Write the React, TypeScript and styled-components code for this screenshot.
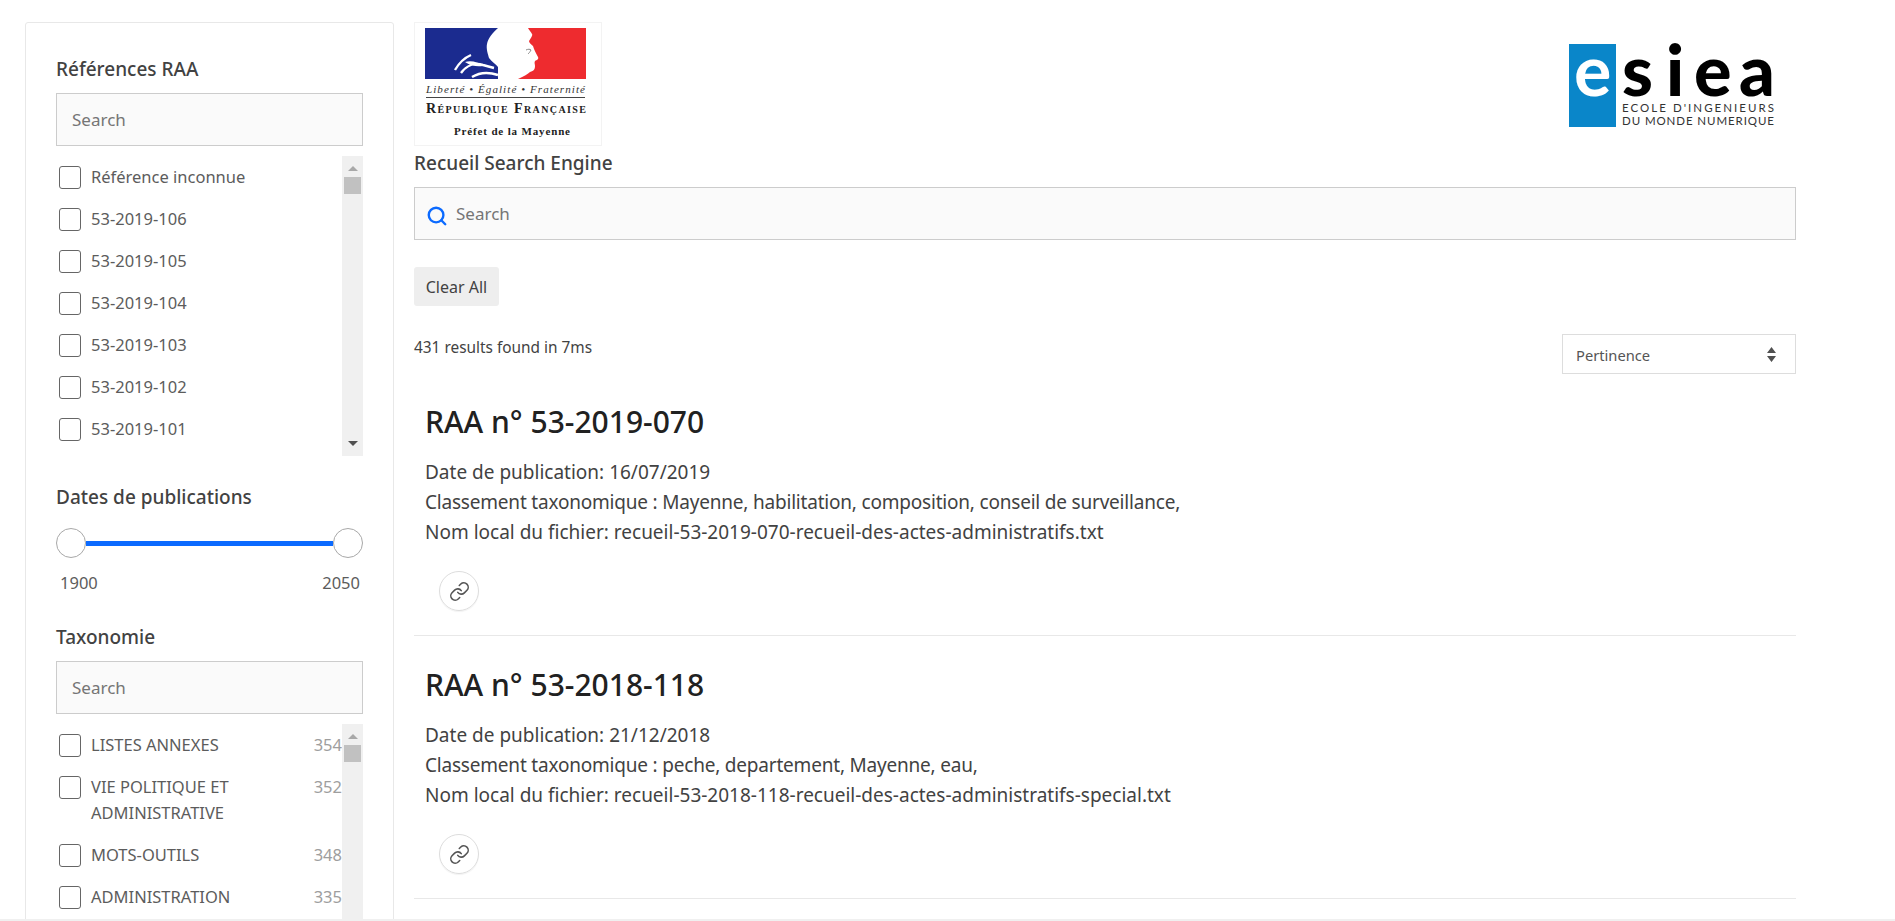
import React from 'react'
import styled, { createGlobalStyle } from 'styled-components'
import { Search, Link } from 'lucide-react'

const GlobalStyle = createGlobalStyle`
  html, body {
    margin: 0;
    height: 100%;
    overflow: hidden;
    background: #fff;
    font-family: "Noto Sans", "Open Sans", sans-serif;
    color: #424242;
  }
  #root { height: 100%; }
  * { box-sizing: border-box; }
`

const Page = styled.div`
  height: 921px;
  display: flex;
  flex-direction: column;
`
const Content = styled.div`
  flex: 1;
  min-height: 0;
  overflow: hidden;
  display: flex;
  align-items: flex-start;
  gap: 20px;
  padding: 22px 0 0 25px;
`
const BottomStrip = styled.div`
  height: 2px;
  background: #f0f0f0;
`

const Sidebar = styled.aside`
  width: 369px;
  flex-shrink: 0;
  border: 1px solid #e8e8e8;
  border-radius: 3px;
  padding: 33px 30px 40px 30px;
`
const FilterTitle = styled.h2`
  margin: 0 0 11px;
  font-size: 19px;
  line-height: 26px;
  font-weight: 500;
  color: #424242;
`
const FilterInput = styled.div`
  height: 53px;
  border: 1px solid #ccc;
  background: #fafafa;
  padding-left: 15px;
  display: flex;
  align-items: center;
  font-size: 17px;
  color: #757575;
`
const ListBox = styled.div<{ $height?: number }>`
  margin-top: 10px;
  display: flex;
  height: ${p => (p.$height ? `${p.$height}px` : 'auto')};
`
const Rows = styled.div`
  flex: 1;
  min-width: 0;
`
const Row = styled.div`
  display: flex;
  align-items: flex-start;
  padding: 8px 0;
  font-size: 16.5px;
  line-height: 26px;
  color: #5c5c5c;
`
const CheckBox = styled.span`
  width: 22px;
  height: 23px;
  margin: 2px 10px 0 3px;
  flex-shrink: 0;
  border: 1.5px solid #666;
  border-radius: 3px;
`
const RowLabel = styled.span`
  flex: 1;
  min-width: 0;
  padding-right: 20px;
`
const RowCount = styled.span`
  color: #9e9e9e;
`
const ScrollTrack = styled.div`
  width: 21px;
  flex-shrink: 0;
  background: #f0f0f0;
  display: flex;
  flex-direction: column;
  align-items: center;
  padding-top: 10px;
`
const ArrowUp = styled.span`
  border-left: 5px solid transparent;
  border-right: 5px solid transparent;
  border-bottom: 5px solid #a8a8a8;
`
const ArrowDown = styled.span`
  margin-top: auto;
  margin-bottom: 10px;
  border-left: 5px solid transparent;
  border-right: 5px solid transparent;
  border-top: 5px solid #505050;
`
const ScrollThumb = styled.span`
  width: 17px;
  height: 17px;
  margin-top: 6px;
  background: #c1c1c1;
`

const SliderBlock = styled.div`
  margin-top: 28px;
`
const SliderTrack = styled.div`
  margin-top: 18px;
  height: 30px;
  display: flex;
  align-items: center;
`
const Thumb = styled.span`
  width: 30px;
  height: 30px;
  border-radius: 50%;
  border: 1px solid #a8a8a8;
  background: #fff;
  flex-shrink: 0;
`
const SliderFill = styled.span`
  flex: 1;
  height: 5px;
  background: #0b6aff;
`
const SliderLabels = styled.div`
  display: flex;
  justify-content: space-between;
  padding: 0 3px 0 4px;
  margin-top: 12px;
  font-size: 16.5px;
  line-height: 26px;
  color: #5c5c5c;
`
const TaxonomyBlock = styled.div`
  margin-top: 28px;
`

const Main = styled.main`
  width: 1382px;
  flex-shrink: 0;
`
const LogoRow = styled.div`
  display: flex;
  justify-content: space-between;
  align-items: flex-start;
`
const EsieaSlot = styled.div`
  margin: 2px 21px 0 0;
  line-height: 0;
`
const StateLogo = styled.svg`
  display: block;
`
const EngineTitle = styled.h1`
  margin: 4px 0 11px;
  font-size: 19px;
  line-height: 26px;
  font-weight: 500;
  color: #424242;
`
const MainSearch = styled.div`
  height: 53px;
  width: 1382px;
  border: 1px solid #ccc;
  background: #fafafa;
  display: flex;
  align-items: center;
  padding-left: 11px;
  gap: 8px;
  font-size: 17px;
  color: #757575;
  svg { margin-top: 4px; }
`
const ClearButton = styled.button`
  display: block;
  margin-top: 27px;
  width: 85px;
  height: 39px;
  border: 0;
  border-radius: 3px;
  background: #eee;
  color: #424242;
  font: inherit;
  font-size: 16px;
  padding: 1px 0 0;
`
const ResultBar = styled.div`
  margin-top: 28px;
  display: flex;
  justify-content: space-between;
  align-items: flex-start;
`
const ResultStat = styled.span`
  font-size: 15.4px;
  line-height: 26px;
  padding-top: 1px;
  color: #424242;
`
const SortSelect = styled.div`
  width: 234px;
  height: 40px;
  border: 1px solid #ddd;
  display: flex;
  align-items: center;
  justify-content: space-between;
  padding: 1px 19px 0 13px;
  font-size: 14.7px;
  color: #555;
`
const Result = styled.article`
  padding: 26px 0 24px 11px;
  border-bottom: 1px solid #e8e8e8;
  & + & { padding-top: 27px; }
`
const ResultTitle = styled.h3`
  margin: 0 0 13px;
  font-size: 30px;
  line-height: 44px;
  font-weight: 550;
  color: #212121;
`
const ResultLine = styled.div<{ $tight?: boolean }>`
  font-size: 19px;
  line-height: 30px;
  color: #424242;
  letter-spacing: ${p => (p.$tight ? '-0.2px' : 'normal')};
`
const LinkButton = styled.span`
  margin: 24px 0 0 14px;
  width: 40px;
  height: 40px;
  display: flex;
  align-items: center;
  justify-content: center;
  border: 1px solid #ddd;
  border-radius: 50%;
  color: #555;
  box-shadow: 0 1px 1px rgba(0, 0, 0, 0.05);
`

const serif = '"Liberation Serif", serif'
const logoSans = 'Lato, "Liberation Sans", sans-serif'

const MarianneLogo = () => (
  <StateLogo width="188" height="124" viewBox="0 0 188 124">
    <rect x="0.5" y="0.5" width="187" height="123" fill="#fff" stroke="#f3f3f3" />
    <path d="M11 6H84C78 11 74 17 73 22C72 27 74 32 75 36C78 40 82 42 84 45V57H11Z" fill="#1b2b8f" />
    <path d="M114 6H172V57H104C110 54 114 52 116 50C120 49 121 47 121 44C121 42 120 41 121 39C123 38 125 37 124 35C122 31 120 28 119 24C117 22 115 21 115 19C117 16 119 13 118 12C117 10 115 8 114 6Z" fill="#ee2b2f" />
    <path d="M41 48C45 41 50 36 57 33M47 51C52 44 60 40 69 43L80 46M58 55C66 50 75 50 84 53" fill="none" stroke="#fff" strokeWidth="2.4" />
    <path d="M51 40C57 38 64 40 69 44C63 45 57 44 51 40Z" fill="#fff" />
    <path d="M112 28C114 27 116 27 117 28C116 30 115 31 114 32" fill="none" stroke="#888" strokeWidth="1" />
    <text x="12" y="71" fontFamily={serif} fontStyle="italic" fontSize="11" textLength="159" fill="#333">
      Liberté • Égalité • Fraternité
    </text>
    <line x1="12" y1="75.5" x2="171" y2="75.5" stroke="#444" />
    <text x="12" y="91" fontFamily={serif} fontWeight="700" fontVariant="small-caps" fontSize="14" textLength="160" fill="#222">
      République Française
    </text>
    <text x="40" y="113" fontFamily={serif} fontWeight="700" fontSize="11" textLength="116" fill="#222">
      Préfet de la Mayenne
    </text>
  </StateLogo>
)

const EsieaLogo = () => (
  <svg width="206" height="104" viewBox="0 -20 206 104">
    <rect x="0" y="0" width="47" height="83" fill="#0a86c9" />
    <text x="5" y="52" fontFamily={logoSans} fontWeight="700" fontSize="70" fill="#fff">e</text>
    <text x="53 97 125 170" y="52" fontFamily={logoSans} fontWeight="900" fontSize="70" fill="#000">
      siea
    </text>
    <text x="53" y="68" fontFamily={logoSans} fontSize="11.5" textLength="152" fill="#333">
      ECOLE D'INGENIEURS
    </text>
    <text x="53" y="81" fontFamily={logoSans} fontSize="11.5" textLength="152" fill="#333">
      DU MONDE NUMERIQUE
    </text>
  </svg>
)

const SortIcon = () => (
  <svg width="9" height="15" viewBox="0 0 9 15">
    <path d="M4.5 0L9 6H0Z M0 9H9L4.5 15Z" fill="#505050" />
  </svg>
)

const references = ['Référence inconnue', '53-2019-106', '53-2019-105', '53-2019-104', '53-2019-103', '53-2019-102', '53-2019-101']

const taxonomies = [
  { name: 'LISTES ANNEXES', count: 354 },
  { name: 'VIE POLITIQUE ET ADMINISTRATIVE', count: 352 },
  { name: 'MOTS-OUTILS', count: 348 },
  { name: 'ADMINISTRATION', count: 335 },
]

const results = [
  {
    id: '53-2019-070',
    date: '16/07/2019',
    tags: 'Mayenne, habilitation, composition, conseil de surveillance,',
    file: 'recueil-53-2019-070-recueil-des-actes-administratifs.txt',
  },
  {
    id: '53-2018-118',
    date: '21/12/2018',
    tags: 'peche, departement, Mayenne, eau,',
    file: 'recueil-53-2018-118-recueil-des-actes-administratifs-special.txt',
  },
]

const App: React.FC = () => {
  return <>
    <GlobalStyle />
    <Page>
      <Content>
        <Sidebar>
          <FilterTitle>Références RAA</FilterTitle>
          <FilterInput>Search</FilterInput>
          <ListBox $height={300}>
            <Rows>
              {references.map(r => (
                <Row key={r}>
                  <CheckBox />
                  <RowLabel>{r}</RowLabel>
                </Row>
              ))}
            </Rows>
            <ScrollTrack>
              <ArrowUp />
              <ScrollThumb />
              <ArrowDown />
            </ScrollTrack>
          </ListBox>

          <SliderBlock>
            <FilterTitle>Dates de publications</FilterTitle>
            <SliderTrack>
              <Thumb />
              <SliderFill />
              <Thumb />
            </SliderTrack>
            <SliderLabels>
              <span>1900</span>
              <span>2050</span>
            </SliderLabels>
          </SliderBlock>

          <TaxonomyBlock>
            <FilterTitle>Taxonomie</FilterTitle>
            <FilterInput>Search</FilterInput>
            <ListBox $height={300}>
              <Rows>
                {taxonomies.map(t => (
                  <Row key={t.name}>
                    <CheckBox />
                    <RowLabel>{t.name}</RowLabel>
                    <RowCount>{t.count}</RowCount>
                  </Row>
                ))}
              </Rows>
              <ScrollTrack>
                <ArrowUp />
                <ScrollThumb />
              </ScrollTrack>
            </ListBox>
          </TaxonomyBlock>
        </Sidebar>

        <Main>
          <LogoRow>
            <MarianneLogo />
            <EsieaSlot>
              <EsieaLogo />
            </EsieaSlot>
          </LogoRow>
          <EngineTitle>Recueil Search Engine</EngineTitle>
          <MainSearch>
            <Search size={22} color="#0b6aff" strokeWidth={2.6} />
            Search
          </MainSearch>
          <ClearButton>Clear All</ClearButton>
          <ResultBar>
            <ResultStat>431 results found in 7ms</ResultStat>
            <SortSelect>
              Pertinence
              <SortIcon />
            </SortSelect>
          </ResultBar>
          {results.map(r => (
            <Result key={r.id}>
              <ResultTitle>RAA n° {r.id}</ResultTitle>
              <ResultLine>Date de publication: {r.date}</ResultLine>
              <ResultLine $tight>Classement taxonomique : {r.tags}</ResultLine>
              <ResultLine>Nom local du fichier: {r.file}</ResultLine>
              <LinkButton>
                <Link size={21} strokeWidth={1.8} />
              </LinkButton>
            </Result>
          ))}
        </Main>
      </Content>
      <BottomStrip />
    </Page>
  </>
}

export default App
